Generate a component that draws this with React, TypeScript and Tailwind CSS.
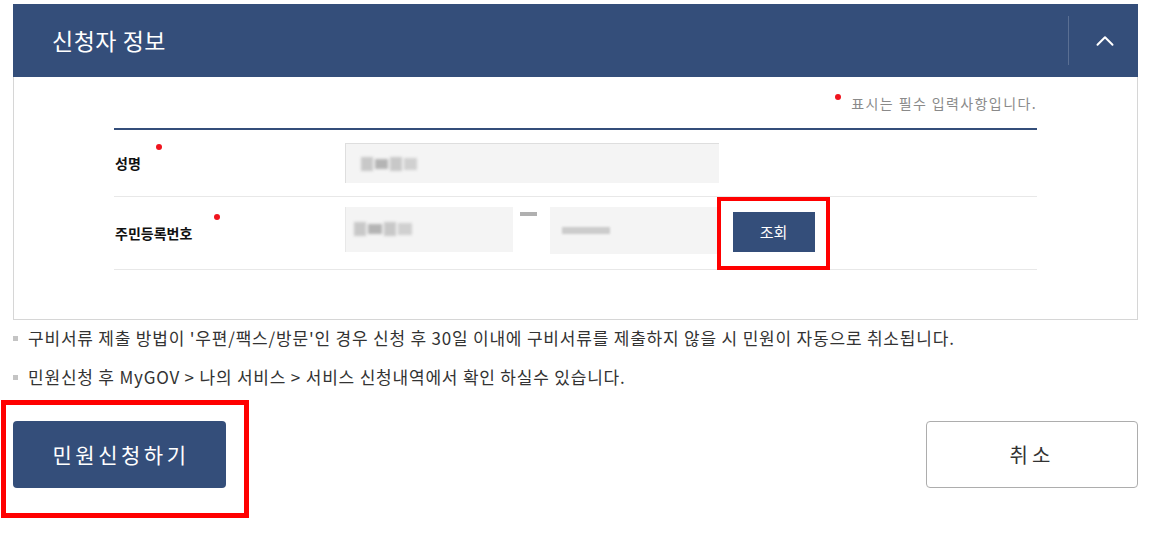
import { ChevronUp } from "lucide-react";

const font = { fontFamily: '"Noto Sans CJK KR", "Noto Sans", sans-serif' };

function Blur({ w, tone = "bg-[#c8c8c8]" }: { w: string; tone?: string }) {
  return (
    <div className={`flex h-[16px] items-center gap-[2px] blur-[1.5px] ${w}`}>
      <div className={`h-[14px] w-[12px] ${tone}`} />
      <div className="h-[10px] w-[14px] bg-[#b4b4b4]" />
      <div className={`h-[14px] w-[12px] ${tone}`} />
      <div className="h-[12px] w-[14px] bg-[#d0d0d0]" />
    </div>
  );
}

function Row({ label, dotLeft, children, last }: { label: string; dotLeft: string; children: React.ReactNode; last?: boolean }) {
  return (
    <div className={`flex items-stretch border-b border-[#e8e8e8] ${last ? "h-[73px]" : "h-[67px]"}`}>
      <div className="relative flex w-[231px] items-center pl-[1px] text-[14px] font-bold text-[#111]">
        <span className="relative">
          {label}
          <span className={`absolute top-[-9px] h-[6px] w-[6px] rounded-full bg-[#f0141e] ${dotLeft}`} />
        </span>
      </div>
      <div className="flex flex-1 items-center">{children}</div>
    </div>
  );
}

export default function App() {
  return (
    <div className="min-h-[536px] w-[1159px] bg-white pt-[4px] text-[#333]" style={font}>
      <div className="mx-[13px] w-[1125px]">
        <div className="flex h-[73px] items-center bg-[#344e7a] pl-[39px]">
          <h2 className="flex-1 text-[23px] font-normal tracking-[0.5px] text-white">신청자 정보</h2>
          <div className="flex h-[49px] w-[70px] items-center justify-center border-l border-[#5a6f93]">
            <ChevronUp className="ml-[2px] h-[30px] w-[30px] text-white" strokeWidth={1.6} />
          </div>
        </div>
        <div className="h-[243px] border border-t-0 border-[#d6d6d6] px-[100px]">
          <p className="flex h-[51px] items-center justify-end pt-[2px] text-[14px] tracking-[1.4px] text-[#8a8a8a]">
            <span className="mr-[10px] mb-[14px] h-[6px] w-[6px] rounded-full bg-[#f0141e]" />
            표시는 필수 입력사항입니다.
          </p>
          <div className="border-t-2 border-[#344e7a]">
            <Row label="성명" dotLeft="left-[41px]">
              <div className="flex h-[40px] w-[374px] items-center border-t border-l border-[#dedede] bg-[#f4f4f4] pl-[15px]">
                <Blur w="w-[56px]" />
              </div>
            </Row>
            <Row label="주민등록번호" dotLeft="left-[99px]" last>
              <div className="mb-[8px] flex h-[45px] w-[168px] items-center border-l border-[#e8e8e8] bg-[#f4f4f4] pl-[8px]">
                <Blur w="w-[60px]" />
              </div>
              <div className="ml-[7px] mr-[13px] mb-[38px] h-[4px] w-[17px] bg-[#b0b0b0] blur-[0.5px]" />
              <div className="mb-[6px] flex h-[47px] w-[167px] items-center bg-[#f4f4f4] pl-[12px]">
                <div className="h-[7px] w-[48px] bg-[#cccccc] blur-[1px]" />
              </div>
              <div className="flex h-[73px] w-[113px] items-center justify-center border-[4px] border-[#ff0000]">
                <button className="mb-[2px] h-[40px] w-[82px] bg-[#344e7a] text-[15px] text-white">조회</button>
              </div>
            </Row>
          </div>
        </div>
      </div>
      <ul className="mt-[6px] space-y-[15px] pl-[13px] text-[17px] tracking-[0.8px] text-[#333]">
        <li className="flex h-[24px] items-center gap-[10px]">
          <span className="h-[5px] w-[5px] bg-[#c4c4c4]" />
          구비서류 제출 방법이 '우편/팩스/방문'인 경우 신청 후 30일 이내에 구비서류를 제출하지 않을 시 민원이 자동으로 취소됩니다.
        </li>
        <li className="flex h-[24px] items-center gap-[10px]">
          <span className="h-[5px] w-[5px] bg-[#c4c4c4]" />
          민원신청 후 MyGOV &gt; 나의 서비스 &gt; 서비스 신청내역에서 확인 하실수 있습니다.
        </li>
      </ul>
      <div className="mt-[11px] flex items-start justify-between pr-[21px]">
        <div className="ml-[1px] h-[118px] w-[248px] border-[5px] border-[#ff0000] pt-[16px] pl-[7px]">
          <button className="h-[67px] w-[213px] rounded-[4px] bg-[#344e7a] pl-[3px] text-[21px] tracking-[3.5px] text-white">
            민원신청하기
          </button>
        </div>
        <button className="mt-[21px] h-[67px] w-[212px] rounded-[4px] border border-[#adadad] bg-white text-[20px] tracking-[4px] text-[#333]">
          취소
        </button>
      </div>
    </div>
  );
}
